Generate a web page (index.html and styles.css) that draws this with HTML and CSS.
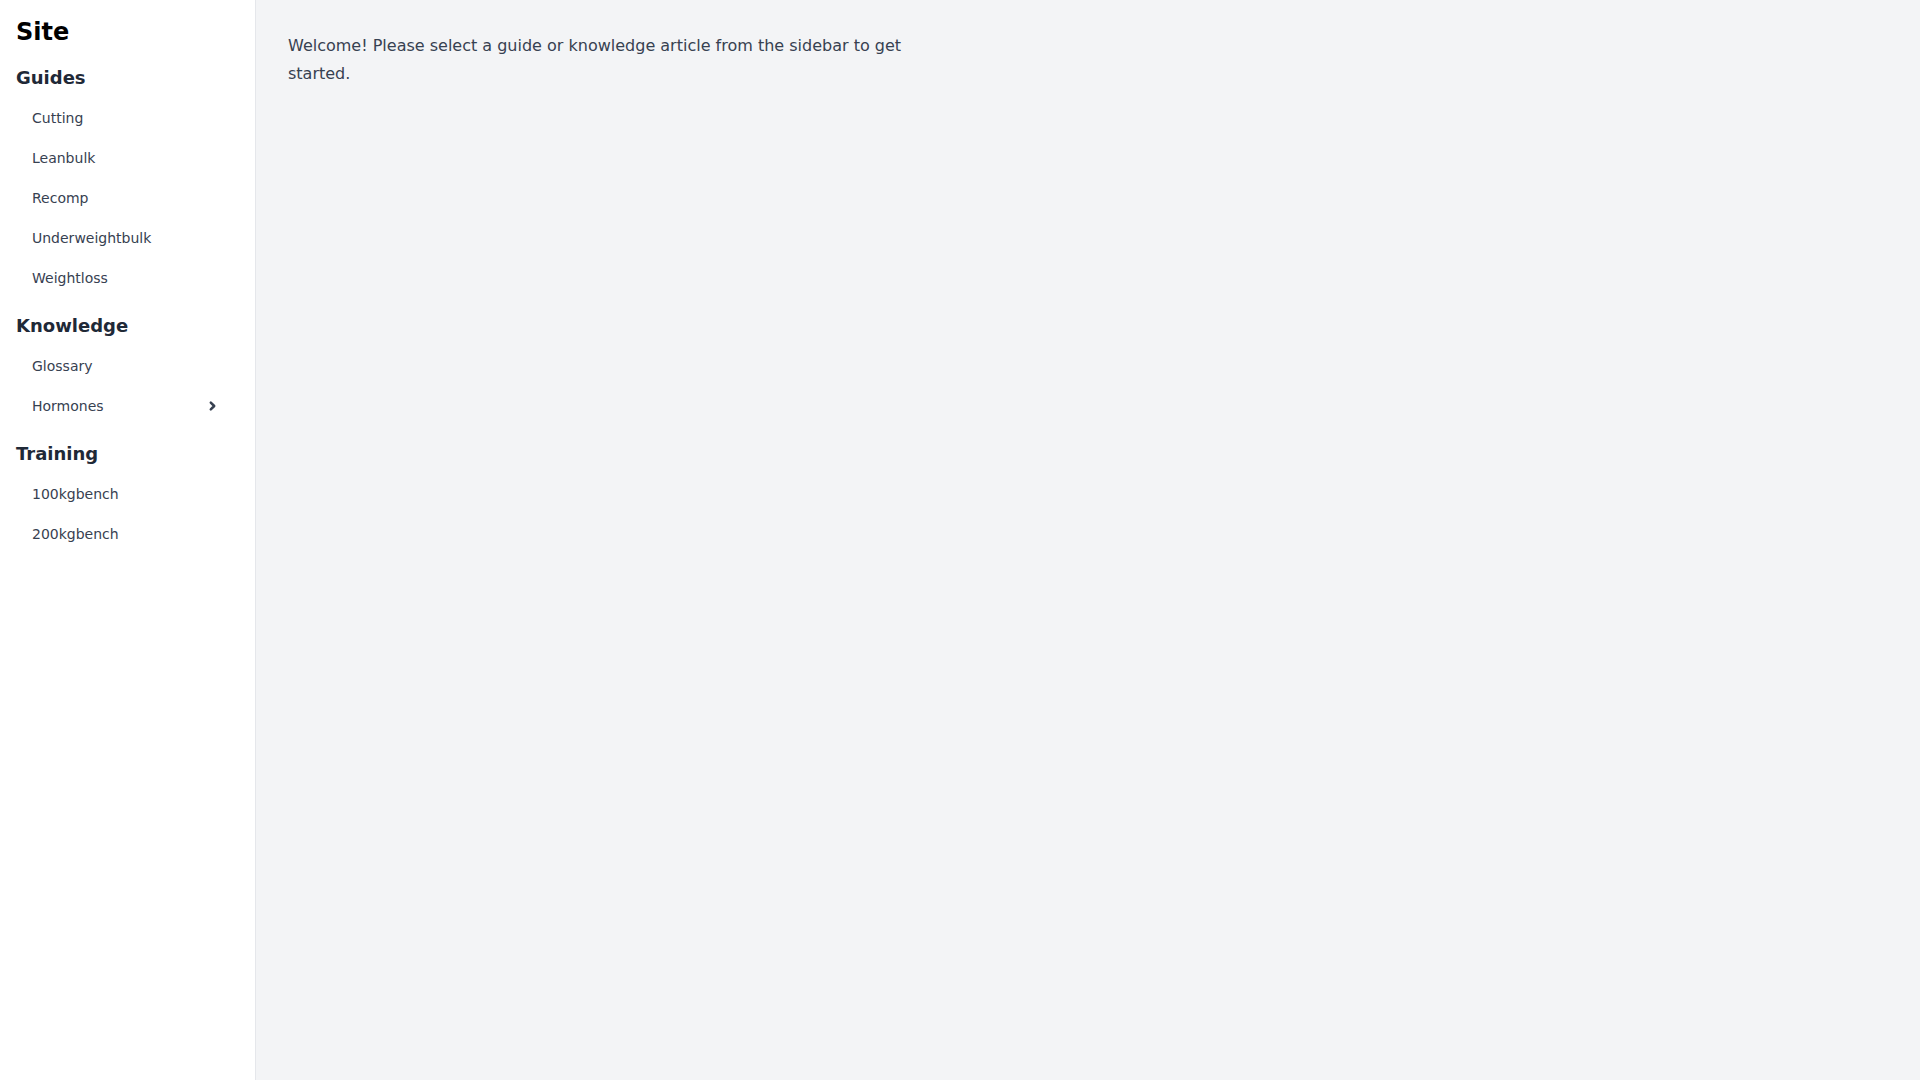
FILE: index.html
```html
<!DOCTYPE html>
<html lang="en">
<head>
<meta charset="utf-8">
<title>Site</title>
<link rel="stylesheet" href="styles.css">
</head>
<body>
<div class="layout">
  <aside class="sidebar">
    <h1 class="site-title">Site</h1>
    <section class="nav-section">
      <h2 class="nav-heading">Guides</h2>
      <ul class="nav-list">
        <li><a class="nav-link" href="#">Cutting</a></li>
        <li><a class="nav-link" href="#">Leanbulk</a></li>
        <li><a class="nav-link" href="#">Recomp</a></li>
        <li><a class="nav-link" href="#">Underweightbulk</a></li>
        <li><a class="nav-link" href="#">Weightloss</a></li>
      </ul>
    </section>
    <section class="nav-section">
      <h2 class="nav-heading">Knowledge</h2>
      <ul class="nav-list">
        <li><a class="nav-link" href="#">Glossary</a></li>
        <li>
          <a class="nav-link nav-link-group" href="#">
            <span>Hormones</span>
            <svg class="chevron" width="16" height="16" viewBox="0 0 16 16" aria-hidden="true">
              <path d="M3.8 4.6 L7.2 8 L3.8 11.4" fill="none" stroke="currentColor" stroke-width="2.5" stroke-linecap="round" stroke-linejoin="round"/>
            </svg>
          </a>
        </li>
      </ul>
    </section>
    <section class="nav-section">
      <h2 class="nav-heading">Training</h2>
      <ul class="nav-list">
        <li><a class="nav-link" href="#">100kgbench</a></li>
        <li><a class="nav-link" href="#">200kgbench</a></li>
      </ul>
    </section>
  </aside>
  <main class="content">
    <div class="prose">
      <p>Welcome! Please select a guide or knowledge article from the sidebar to get started.</p>
    </div>
  </main>
</div>
</body>
</html>
```

FILE: styles.css
```css
* {
  box-sizing: border-box;
}

html, body {
  margin: 0;
  padding: 0;
  height: 100%;
}

body {
  font-family: "DejaVu Sans", sans-serif;
  color: #111827;
}

.layout {
  display: flex;
  min-height: 100vh;
}

.sidebar {
  width: 256px;
  flex-shrink: 0;
  background: #ffffff;
  border-right: 1px solid #e5e7eb;
  padding: 16px;
}

.site-title {
  margin: 0 0 16px;
  font-size: 24px;
  line-height: 32px;
  font-weight: 700;
  color: #000000;
}

.nav-section {
  margin-bottom: 16px;
}

.nav-heading {
  margin: 0 0 8px;
  font-size: 18px;
  line-height: 28px;
  font-weight: 700;
  color: #1f2937;
}

.nav-list {
  list-style: none;
  margin: 0;
  padding: 0;
  display: flex;
  flex-direction: column;
  gap: 4px;
}

.nav-link {
  display: block;
  padding: 8px 16px;
  font-size: 14px;
  line-height: 20px;
  color: #374151;
  text-decoration: none;
  border-radius: 4px;
}

.nav-link-group {
  display: flex;
  align-items: center;
  justify-content: space-between;
}

.chevron {
  display: block;
  color: #374151;
}

.content {
  flex: 1;
  background: #f3f4f6;
  padding: 32px;
}

.prose {
  max-width: 65ch;
  font-size: 16px;
  line-height: 28px;
  color: #374151;
}

.prose p {
  margin: 0;
}
```
